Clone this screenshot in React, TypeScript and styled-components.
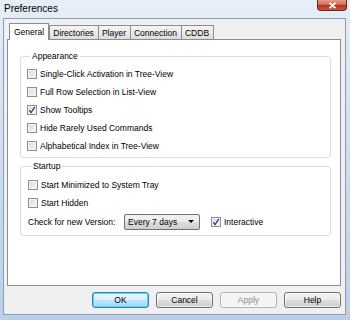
import styled, { createGlobalStyle } from "styled-components"

const GlobalStyle = createGlobalStyle`
  html, body {
    margin: 0;
    padding: 0;
  }
  body {
    width: 350px;
    height: 320px;
    overflow: hidden;
    font-family: "Liberation Sans", Arial, sans-serif;
    color: #000;
  }
`

const appearance = [
  { label: "Single-Click Activation in Tree-View", checked: false },
  { label: "Full Row Selection in List-View", checked: false },
  { label: "Show Tooltips", checked: true },
  { label: "Hide Rarely Used Commands", checked: false },
  { label: "Alphabetical Index in Tree-View", checked: false },
]

const tabs = ["General", "Directories", "Player", "Connection", "CDDB"]

function CheckBox({ checked }: { checked?: boolean }) {
  return (
    <Box>
      {checked && (
        <svg width="8" height="8" viewBox="0 0 8 8">
          <path d="M1.2 4.2 L3 6.6 L6.9 0.9" fill="none" stroke="#2a3f8f" strokeWidth="1.3" />
        </svg>
      )}
    </Box>
  )
}

export default function App() {
  return (
    <Window>
      <GlobalStyle />
      <TitleBar>
        <Title>Preferences</Title>
        <CloseButton>
          <svg width="9" height="7" viewBox="0 0 9 7">
            <path d="M1.5 0.8 L7.5 6.2 M7.5 0.8 L1.5 6.2" stroke="#fff" strokeWidth="1.8" />
          </svg>
        </CloseButton>
      </TitleBar>
      <Body>
        <TabStrip>
          {tabs.map((t, i) => (
            <Tab key={t} $active={i === 0}>{t}</Tab>
          ))}
        </TabStrip>
        <Panel>
          <Group>
            <Legend>Appearance</Legend>
            {appearance.map((a) => (
              <Row key={a.label}>
                <CheckBox checked={a.checked} />
                <span>{a.label}</span>
              </Row>
            ))}
          </Group>
          <Group $second>
            <Legend>Startup</Legend>
            <Row>
              <CheckBox />
              <span>Start Minimized to System Tray</span>
            </Row>
            <Row>
              <CheckBox />
              <span>Start Hidden</span>
            </Row>
            <Row $tall>
              <FieldLabel>Check for new Version:</FieldLabel>
              <Combo>
                <span>Every 7 days</span>
                <Arrow />
              </Combo>
              <Interactive>
                <CheckBox checked />
                <span>Interactive</span>
              </Interactive>
            </Row>
          </Group>
        </Panel>
        <ButtonRow>
          <Button $default>OK</Button>
          <Button>Cancel</Button>
          <Button $disabled>Apply</Button>
          <Button>Help</Button>
        </ButtonRow>
      </Body>
    </Window>
  )
}

const Window = styled.div`
  width: 350px;
  height: 320px;
  box-sizing: border-box;
  display: flex;
  flex-direction: column;
  padding: 0 4px 5px 3px;
  background: linear-gradient(180deg, #e6eef8 0%, #d6e3f2 30%, #c6d7ec 70%, #bccfe8 100%);
`
const TitleBar = styled.div`
  height: 18px;
  display: flex;
  justify-content: space-between;
  align-items: flex-start;
  flex-shrink: 0;
`
const Title = styled.span`
  font-size: 10px;
  padding-top: 3px;
  padding-left: 1px;
`
const CloseButton = styled.div`
  width: 30px;
  height: 11px;
  margin-right: -1px;
  box-sizing: border-box;
  border: 1px solid #6e2418;
  border-top: none;
  border-radius: 0 0 4px 4px;
  background: linear-gradient(180deg, #e59a88 0%, #d0705c 45%, #b8321c 55%, #c85a3e 100%);
  display: flex;
  align-items: center;
  justify-content: center;
`
const Body = styled.div`
  flex: 1;
  display: flex;
  flex-direction: column;
  background: #f0f0f0;
  border: 1px solid #8d9db4;
  padding: 4px 4px 6px 3px;
  min-height: 0;
`
const TabStrip = styled.div`
  display: flex;
  align-items: flex-end;
  height: 17px;
  padding-left: 2px;
  margin-bottom: -1px;
  position: relative;
  z-index: 1;
`
const Tab = styled.div<{ $active?: boolean }>`
  box-sizing: border-box;
  height: ${(p) => (p.$active ? "17px" : "15px")};
  padding: ${(p) => (p.$active ? "2px 4px 0 4px" : "1px 4px 0 3px")};
  margin-left: ${(p) => (p.$active ? "0" : "-1px")};
  font-size: 8.5px;
  line-height: 12px;
  border: 1px solid #898c95;
  border-bottom: ${(p) => (p.$active ? "none" : "1px solid #898c95")};
  background: ${(p) => (p.$active ? "#fff" : "linear-gradient(180deg, #f4f4f4 0%, #ebebeb 50%, #dcdcdc 100%)")};
  &:nth-child(2) {
    margin-left: 0;
  }
`
const Panel = styled.div`
  flex: 1;
  display: flex;
  flex-direction: column;
  background: #fff;
  border: 1px solid #898c95;
  padding: 11px 9px 0 12px;
`
const Group = styled.fieldset<{ $second?: boolean }>`
  margin: ${(p) => (p.$second ? "3px 0 0 0" : "0")};
  padding: ${(p) => (p.$second ? "5px 8px 4px 7px" : "4px 8px 2px 6px")};
  border: 1px solid #d5dfe5;
  border-radius: 3px;
  min-width: 0;
`
const Legend = styled.legend`
  font-size: 8.5px;
  line-height: 10px;
  padding: 0 2px;
  margin-left: 3px;
`
const Row = styled.div<{ $tall?: boolean }>`
  display: flex;
  align-items: center;
  height: ${(p) => (p.$tall ? "19px" : "18px")};
  gap: 3px;
  font-size: 8.5px;
  white-space: nowrap;
`
const Box = styled.span`
  width: 10px;
  height: 10px;
  box-sizing: border-box;
  border: 1px solid #8e8f8f;
  background: linear-gradient(135deg, #d8d8d8 0%, #ececec 60%, #f6f6f6 100%);
  box-shadow: inset 0 0 0 1px #f4f4f4;
  display: flex;
  align-items: center;
  justify-content: center;
  flex-shrink: 0;
`
const FieldLabel = styled.span`
  width: 93px;
`
const Combo = styled.div`
  width: 76px;
  height: 16px;
  box-sizing: border-box;
  border: 1px solid #707070;
  border-radius: 2px;
  background: linear-gradient(180deg, #f2f2f2 0%, #ebebeb 50%, #dddddd 51%, #cfcfcf 100%);
  display: flex;
  align-items: center;
  justify-content: space-between;
  padding: 0 5px 0 3px;
  font-size: 8.5px;
`
const Arrow = styled.span`
  width: 0;
  height: 0;
  border-left: 3px solid transparent;
  border-right: 3px solid transparent;
  border-top: 3px solid #000;
`
const Interactive = styled.div`
  display: flex;
  align-items: center;
  gap: 3px;
  margin-left: 8px;
`
const ButtonRow = styled.div`
  display: flex;
  justify-content: flex-end;
  gap: 7px;
  margin-top: 6px;
  flex-shrink: 0;
`
const Button = styled.div<{ $default?: boolean; $disabled?: boolean }>`
  width: 57px;
  height: 16px;
  box-sizing: border-box;
  border-radius: 3px;
  display: flex;
  align-items: center;
  justify-content: center;
  font-size: 8.5px;
  color: ${(p) => (p.$disabled ? "#8d8d8d" : "#000")};
  border: 1px solid ${(p) => (p.$default ? "#3c7fb1" : p.$disabled ? "#adb2b5" : "#707070")};
  background: ${(p) =>
    p.$default
      ? "linear-gradient(180deg, #eaf6fd 0%, #d9f0fc 50%, #bee6fd 51%, #a7d9f5 100%)"
      : p.$disabled
      ? "#f4f4f4"
      : "linear-gradient(180deg, #f2f2f2 0%, #ebebeb 50%, #dddddd 51%, #cfcfcf 100%)"};
  box-shadow: ${(p) => (p.$default ? "inset 0 0 0 1px #48d8fb" : "inset 0 0 0 1px rgba(255,255,255,0.6)")};
`
